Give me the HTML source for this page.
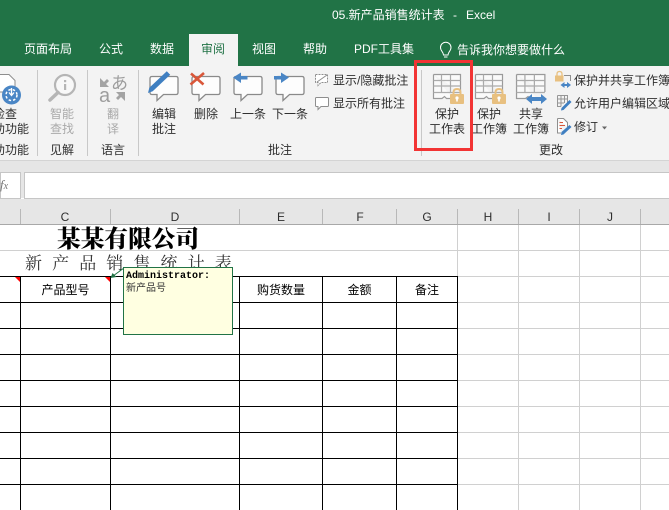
<!DOCTYPE html>
<html><head><meta charset="utf-8">
<style>
html,body{margin:0;padding:0;width:669px;height:510px;overflow:hidden;background:#fff}
svg{display:block;position:absolute;left:0;top:0}
text{font-family:"Liberation Sans","Noto Sans CJK SC",sans-serif;font-size:12px;fill:#2e2e2e}
.t{fill:#fff}
.g{fill:#a9a9a9}
.c{font-family:"Liberation Sans","WenQuanYi Zen Hei",sans-serif;fill:#000}
.m{text-anchor:middle}
.e{text-anchor:end}
</style></head><body>
<svg width="669" height="510" viewBox="0 0 669 510" xmlns="http://www.w3.org/2000/svg">
<defs>
<g id="bub"><path d="M1.500 .5H25.500Q27.500 .5 27.500 2.500V16.500Q27.500 18.500 25.500 18.500H13L6.500 24.500V18.500H1.500Q-.5 18.500 -.5 16.500V2.500Q-.5 .5 1.500 .5Z" fill="#fdfdfd" stroke="#8a8a8a" stroke-width="1.300"/></g>
<g id="grid"><path d="M.5 .5H27.500V18M.5 .5V24.500H9L11.500 22.500L13.500 24.500H20" fill="#fafafa" stroke="#9a9a9a" stroke-width="1.200"/><path d="M.5 6.500H27.500M.5 12H27.500M.5 18.500H27.500M8.500 .5V18.500M17.500 .5V18.500" fill="none" stroke="#ababab" stroke-width="1.200"/></g>
<g id="lock"><path d="M3.500 7V4.500Q3.500 1 7 1Q10.500 1 10.500 4.500V7" fill="none" stroke="#e8c080" stroke-width="2"/><rect x="0" y="6" width="14" height="10" rx="1" fill="#e8c080"/><circle cx="7" cy="10" r="1.600" fill="#fff"/><rect x="6.200" y="10" width="1.600" height="3.500" fill="#fff"/></g>
</defs>

<rect width="669" height="66" fill="#217346"/>
<rect x="189" y="34" width="49" height="33" fill="#f3f3f3"/>
<rect y="66" width="669" height="94" fill="#f3f3f3"/>
<rect y="160" width="669" height="1" fill="#d4d4d4"/>
<rect y="161" width="669" height="37" fill="#e6e6e6"/>

<text class="t" x="332" y="19">05.新产品销售统计表</text>
<text class="t" x="453" y="19">-</text>
<text class="t" x="466" y="19">Excel</text>

<text class="t" x="24" y="53">页面布局</text>
<text class="t" x="99" y="53">公式</text>
<text class="t" x="150" y="53">数据</text>
<text x="201" y="53" style="fill:#217346">审阅</text>
<text class="t" x="252" y="53">视图</text>
<text class="t" x="303" y="53">帮助</text>
<text class="t" x="354" y="53">PDF工具集</text>
<path d="M443.500 55C443.500 52 440.500 51 440.500 47.500A5.200 5.200 0 0 1 451 47.500C451 51 448 52 448 55ZM444 57H447.500" fill="none" stroke="#fff"/>
<text class="t" x="457" y="54">告诉我你想要做什么</text>

<rect x="37" y="70" width="1" height="86" fill="#c8c8c8"/>
<rect x="87" y="70" width="1" height="86" fill="#c8c8c8"/>
<rect x="138" y="70" width="1" height="86" fill="#c8c8c8"/>
<rect x="421" y="70" width="1" height="86" fill="#c8c8c8"/>

<path d="M-2 74.500H9L15 80.500V92H-2Z" fill="#fff" stroke="#8e8e8e"/>
<circle cx="11.500" cy="95" r="9.500" fill="#4a86c5"/>
<circle cx="11.500" cy="95" r="5.500" fill="none" stroke="#fff" stroke-width="1.500" stroke-dasharray="2.500 2"/>
<path d="M11.500 88V95M9 92.500L11.500 95.500L14 92.500" fill="none" stroke="#fff" stroke-width="1.300"/>
<text class="e" x="17" y="118">检查</text>
<text class="e" x="29" y="133">辅助功能</text>
<text class="e" x="29" y="154">辅助功能</text>

<circle cx="65" cy="85" r="10" fill="#f8f8f8" stroke="#b5b5b5" stroke-width="2.200"/>
<path d="M58 92.500L50 100" stroke="#b5b5b5" stroke-width="3.500" stroke-linecap="round"/>
<rect x="64" y="84" width="2.200" height="6" fill="#b5b5b5"/><rect x="64" y="80" width="2.200" height="2.200" fill="#b5b5b5"/>
<text class="g m" x="62" y="118">智能</text>
<text class="g m" x="62" y="133">查找</text>
<text class="m" x="62" y="154">见解</text>

<text x="111" y="89" style="font-size:17px;fill:#9d9d9d">あ</text>
<text x="99" y="102" style="font-size:20px;fill:#9d9d9d">a</text>
<path d="M100 78V87H109L106 84L109 81L107 79L104 82ZM125 101V92H116L119 95L116 98L118 100L121 97Z" fill="#a3a3a3"/>
<text class="g m" x="113" y="118">翻</text>
<text class="g m" x="113" y="133">译</text>
<text class="m" x="113" y="154">语言</text>

<use href="#bub" x="150.500" y="76"/>
<path d="M149.300 87.700L166.800 71.200L170.200 74.800L152.700 91.300L148 93Z" fill="#3f7fc1"/>
<text class="m" x="164" y="118">编辑</text>
<text class="m" x="164" y="133">批注</text>

<use href="#bub" x="192.500" y="76"/>
<path d="M191 73.500L203.500 84.500M204 73L190.500 84.500" stroke="#d9573a" stroke-width="2.600"/>
<text class="m" x="206" y="118">删除</text>

<use href="#bub" x="234.500" y="76"/>
<path d="M233 77.500L241 72.500V76H247.500V79.500H241V83Z" fill="#4a86c5"/>
<text class="m" x="248" y="118">上一条</text>

<use href="#bub" x="276.500" y="76"/>
<path d="M289 77.500L281 72.500V76H274V79.500H281V83Z" fill="#4a86c5"/>
<text class="m" x="290" y="118">下一条</text>

<path d="M315.500 74.500H327.500V82.500H321L318 85.500V82.500H315.500Z" fill="#fff" stroke="#8e8e8e" stroke-dasharray="2 1"/>
<path d="M317 82L327 75" stroke="#8e8e8e"/>
<path d="M316.500 97.500H327.500Q328.500 97.500 328.500 98.500V105.500Q328.500 106.500 327.500 106.500H321L318 109.500V106.500H316.500Q315.500 106.500 315.500 105.500V98.500Q315.500 97.500 316.500 97.500Z" fill="#fff" stroke="#8e8e8e"/>
<text x="333" y="84.500">显示/隐藏批注</text>
<text x="333" y="107.500">显示所有批注</text>
<text class="m" x="280" y="154">批注</text>

<use href="#grid" x="433" y="74"/>
<use href="#lock" x="450" y="88"/>
<text class="m" x="447" y="118">保护</text>
<text class="m" x="447" y="133">工作表</text>

<use href="#grid" x="475" y="74"/>
<use href="#lock" x="492" y="88"/>
<text class="m" x="489" y="118">保护</text>
<text class="m" x="489" y="133">工作簿</text>

<g transform="translate(516 74) scale(1.050 1)"><use href="#grid"/></g>
<path d="M526 99L532 94V97H541V94L547 99L541 104V101H532V104Z" fill="#4a86c5"/>
<text class="m" x="531" y="118">共享</text>
<text class="m" x="531" y="133">工作簿</text>

<path d="M557 77V74Q557 71.500 559.500 71.500Q562 71.500 562 74V77" fill="none" stroke="#e8c080" stroke-width="1.300"/>
<rect x="555" y="75.500" width="8.500" height="6" fill="#e8c080"/>
<path d="M564 75.500H570.500V81" fill="none" stroke="#8e8e8e"/>
<path d="M560.500 85L564.500 82V84H567V82L571 85L567 88V86H564.500V88Z" fill="#4a86c5"/>
<text x="574" y="84.500">保护并共享工作簿</text>

<path d="M557.500 95.500H567.500V103M557.500 95.500V106.500H561M557.500 99H567.500M557.500 103H564M561 95.500V106.500M564.500 95.500V103" fill="none" stroke="#969696"/>
<path d="M561.500 108L569.500 100L571.500 102L563.500 110L561 110.500Z" fill="#3f7fc1"/>
<text x="574" y="107.500">允许用户编辑区域</text>

<path d="M557.500 118.500H563.500L567.500 122.500V127M557.500 118.500V133H561" fill="#fff" stroke="#8e8e8e"/>
<path d="M559.500 122.500H563M559.500 125.500H565M559.500 128.500H562" stroke="#d9573a"/>
<path d="M561.500 132L569.500 125L571.500 127L563.500 134.500L561 135Z" fill="#3f7fc1"/>
<text x="574" y="131">修订</text>
<path d="M602 126.500H607L604.500 129.500Z" fill="#666"/>
<text class="m" x="551" y="154">更改</text>

<rect x="415.500" y="61.500" width="56" height="88" fill="none" stroke="#f23434" stroke-width="3"/>

<rect x=".5" y="172.500" width="20" height="26" fill="#fff" stroke="#c6c6c6"/>
<rect x="24.500" y="172.500" width="646" height="26" fill="#fff" stroke="#c6c6c6"/>
<text x="0" y="189" style="font-family:'Liberation Serif',serif;font-style:italic;font-size:13px;fill:#777">f<tspan font-size="10">x</tspan></text>

<rect y="199" width="669" height="25" fill="#e6e6e6"/>
<rect y="224" width="669" height="1" fill="#a8a8a8"/>
<g fill="#b8b8b8"><rect x="20" y="209" width="1" height="15"/><rect x="110" y="209" width="1" height="15"/><rect x="239" y="209" width="1" height="15"/><rect x="322" y="209" width="1" height="15"/><rect x="396" y="209" width="1" height="15"/><rect x="457" y="209" width="1" height="15"/><rect x="518" y="209" width="1" height="15"/><rect x="579" y="209" width="1" height="15"/><rect x="640" y="209" width="1" height="15"/></g>
<g>
<text class="m" x="65" y="221">C</text><text class="m" x="175" y="221">D</text><text class="m" x="281" y="221">E</text><text class="m" x="360" y="221">F</text><text class="m" x="427" y="221">G</text><text class="m" x="488" y="221">H</text><text class="m" x="549" y="221">I</text><text class="m" x="610" y="221">J</text>
</g>

<rect y="225" width="669" height="285" fill="#fff"/>
<g fill="#d0d0d0">
<rect y="250" width="669" height="1"/>
<rect x="457" y="225" width="1" height="51"/>
<rect x="518" y="225" width="1" height="285"/>
<rect x="579" y="225" width="1" height="285"/>
<rect x="640" y="225" width="1" height="285"/>
<rect x="458" y="276" width="211" height="1"/><rect x="458" y="302" width="211" height="1"/><rect x="458" y="328" width="211" height="1"/><rect x="458" y="354" width="211" height="1"/><rect x="458" y="380" width="211" height="1"/><rect x="458" y="406" width="211" height="1"/><rect x="458" y="432" width="211" height="1"/><rect x="458" y="458" width="211" height="1"/><rect x="458" y="484" width="211" height="1"/>
</g>
<g fill="#000">
<rect y="276" width="458" height="1"/><rect y="302" width="458" height="1"/><rect y="328" width="458" height="1"/><rect y="354" width="458" height="1"/><rect y="380" width="458" height="1"/><rect y="406" width="458" height="1"/><rect y="432" width="458" height="1"/><rect y="458" width="458" height="1"/><rect y="484" width="458" height="1"/>
<rect x="20" y="276" width="1" height="234"/><rect x="110" y="276" width="1" height="234"/><rect x="239" y="276" width="1" height="234"/><rect x="322" y="276" width="1" height="234"/><rect x="396" y="276" width="1" height="234"/><rect x="457" y="276" width="1" height="234"/>
</g>

<text x="57" y="247" style="font-family:'Liberation Serif','Noto Serif CJK SC',serif;font-weight:900;font-size:23.700px;fill:#000">某某有限公司</text>
<text x="25" y="269" style="font-family:'Liberation Serif','Noto Serif CJK SC',serif;font-size:17px;fill:#333;letter-spacing:10.100px">新产品销售统计表</text>

<text class="c m" x="65.500" y="294">产品型号</text>
<text class="c m" x="281" y="294">购货数量</text>
<text class="c m" x="359.500" y="294">金额</text>
<text class="c m" x="427" y="294">备注</text>

<path d="M15 277H20V282Z" fill="#f00"/>
<path d="M105 277H110V282Z" fill="#f00"/>

<path d="M124 268L113 276" stroke="#217346"/>
<path d="M110.500 278L116.500 277L112.500 273Z" fill="#217346"/>
<rect x="123.500" y="267.500" width="109" height="67" fill="#ffffe1" stroke="#217346"/>
<text x="126" y="278" style="font-family:'Liberation Mono',monospace;font-weight:bold;font-size:10px;fill:#000">Administrator:</text>
<text x="126" y="291" style="font-family:'Liberation Sans','WenQuanYi Zen Hei',sans-serif;font-size:10px;fill:#333">新产品号</text>
</svg>
</body></html>
